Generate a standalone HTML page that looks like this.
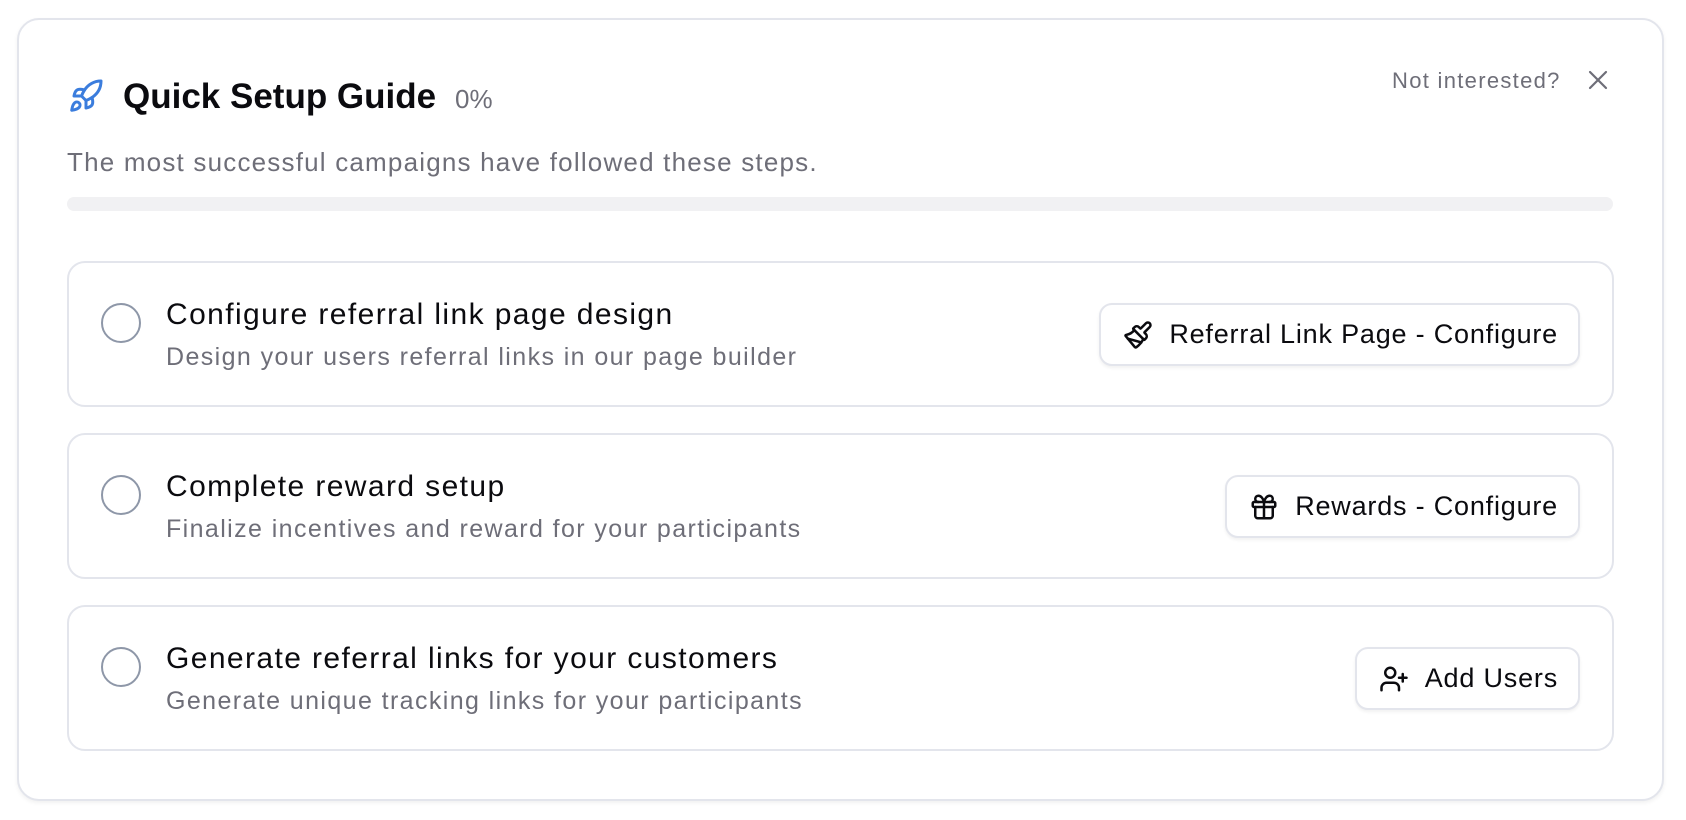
<!DOCTYPE html>
<html><head><meta charset="utf-8"><style>
*{box-sizing:border-box;margin:0;padding:0}
body{width:1686px;height:820px;background:#fff;font-family:"Liberation Sans",sans-serif;position:relative;overflow:hidden}
.card{position:absolute;left:17px;top:18px;width:1647px;height:783px;border:2px solid #e3e5ec;border-radius:22px;background:#fff;box-shadow:0 2px 4px rgba(0,0,0,.06)}
.abs{position:absolute;white-space:nowrap}
.title{left:123px;top:77px;font-size:35px;font-weight:bold;color:#0b0b0f;letter-spacing:0px}
.pct{left:455px;top:84px;font-size:26px;color:#6e6e78}
.not{left:1392px;top:68px;font-size:22px;color:#6e6e78;letter-spacing:1.3px}
.sub{left:67px;top:147px;font-size:26px;color:#6e6e78;letter-spacing:1.2px}
.bar{position:absolute;left:67px;top:197px;width:1546px;height:14px;border-radius:7px;background:#f1f1f3}
.step{position:absolute;left:67px;width:1547px;height:146px;border:2px solid #e3e5ec;border-radius:18px}
.circ{position:absolute;left:32px;top:40px;width:40px;height:40px;border:2px solid #8e97a8;border-radius:50%}
.st{position:absolute;left:97px;top:35px;font-size:30px;color:#0b0b0f;white-space:nowrap;letter-spacing:1.4px}
.sd{position:absolute;left:97px;top:80px;font-size:25px;color:#6e6e78;white-space:nowrap;letter-spacing:1.4px}
.btn{position:absolute;right:32px;top:40px;height:63px;border:2px solid #e3e5ec;border-radius:13px;box-shadow:0 2px 3px rgba(0,0,0,.06);display:flex;align-items:center;padding:0 20px 0 22px;font-size:27px;color:#0b0b0f;white-space:nowrap;gap:16px;background:#fff;letter-spacing:0.8px}
.btn svg{width:30px;height:30px;flex:none}
</style></head><body>
<div class="card"></div>
<svg class="abs" style="left:67px;top:78px" width="38" height="36" viewBox="0 0 24 24" fill="none" stroke="#3b7ddd" stroke-width="2" stroke-linecap="round" stroke-linejoin="round"><path d="M4.5 16.5c-1.5 1.26-2 5-2 5s3.74-.5 5-2c.71-.84.7-2.130-.09-2.91a2.18 2.18 0 0 0-2.91-.09z"/><path d="m12 15-3-3a22 22 0 0 1 2-3.950A12.88 12.88 0 0 1 22 2c0 2.72-.78 7.5-6 11a22.35 22.35 0 0 1-4 2z"/><path d="M9 12H4s.55-3.03 2-4c1.62-1.08 5 0 5 0"/><path d="M12 15v5s3.03-.55 4-2c1.08-1.62 0-5 0-5"/></svg>
<div class="abs title">Quick Setup Guide</div>
<div class="abs pct">0%</div>
<div class="abs not">Not interested?</div>
<svg class="abs" style="left:1587px;top:69px" width="22" height="22" viewBox="0 0 22 22" stroke="#6e6e78" stroke-width="2.2" stroke-linecap="round"><path d="M3 3 19 19M19 3 3 19"/></svg>
<div class="abs sub">The most successful campaigns have followed these steps.</div>
<div class="bar"></div>

<div class="step" style="top:261px"><div class="circ"></div><div class="st">Configure referral link page design</div><div class="sd">Design your users referral links in our page builder</div>
<div class="btn"><svg viewBox="0 0 24 24" fill="none" stroke="#0b0b0f" stroke-width="2" stroke-linecap="round" stroke-linejoin="round"><path d="m14.622 17.897-10.68-2.913"/><path d="M18.376 2.622a1 1 0 1 1 3.002 3.002L17.36 9.643a.5.5 0 0 0 0 .707l.944.944a2.41 2.41 0 0 1 0 3.408l-.944.944a.5.5 0 0 1-.707 0L8.354 7.348a.5.5 0 0 1 0-.707l.944-.944a2.41 2.41 0 0 1 3.408 0l.944.944a.5.5 0 0 0 .707 0z"/><path d="M9 8c-1.804 2.710-3.970 3.460-6.583 3.948a.507.507 0 0 0-.302.819l7.320 8.883a1 1 0 0 0 1.185.204C12.735 20.405 16 16.792 16 15"/></svg>Referral Link Page - Configure</div></div>

<div class="step" style="top:433px"><div class="circ"></div><div class="st">Complete reward setup</div><div class="sd">Finalize incentives and reward for your participants</div>
<div class="btn"><svg viewBox="0 0 24 24" fill="none" stroke="#0b0b0f" stroke-width="2" stroke-linecap="round" stroke-linejoin="round"><rect x="3" y="8" width="18" height="4" rx="1"/><path d="M12 8v13M19 12v7a2 2 0 0 1-2 2H7a2 2 0 0 1-2-2v-7"/><path d="M7.5 8a2.5 2.5 0 0 1 0-5A4.8 8 0 0 1 12 8a4.8 8 0 0 1 4.5-5 2.5 2.5 0 0 1 0 5"/></svg>Rewards - Configure</div></div>

<div class="step" style="top:605px"><div class="circ"></div><div class="st">Generate referral links for your customers</div><div class="sd">Generate unique tracking links for your participants</div>
<div class="btn"><svg viewBox="0 0 24 24" fill="none" stroke="#0b0b0f" stroke-width="2" stroke-linecap="round" stroke-linejoin="round"><path d="M16 21v-2a4 4 0 0 0-4-4H6a4 4 0 0 0-4 4v2"/><circle cx="9" cy="7" r="4"/><path d="M19 8v6M22 11h-6"/></svg>Add Users</div></div>
</body></html>
